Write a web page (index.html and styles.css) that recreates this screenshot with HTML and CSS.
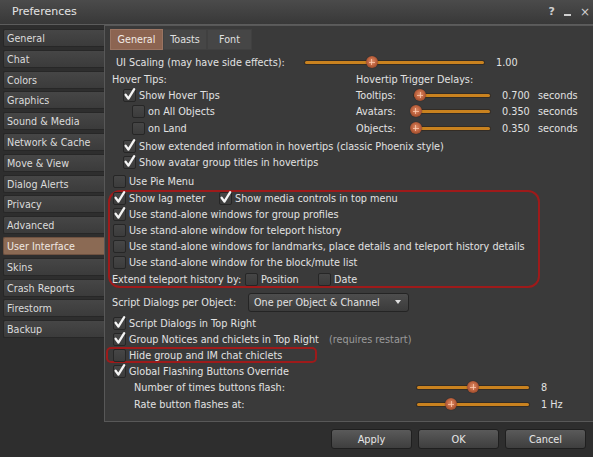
FILE: index.html
```html
<!DOCTYPE html>
<html>
<head>
    <meta charset="utf-8">
    <title>Preferences</title>
    <link rel="stylesheet" href="styles.css">
</head>
<body>
<div class="floater">
    <div class="titlebar">
        <span class="title">Preferences</span>
        <span class="ctrls">
            <span class="help">?</span>
            <span class="min"></span>
            <span class="close">&times;</span>
        </span>
    </div>
    <div class="main">
        <ul class="side">
            <li>General</li>
            <li>Chat</li>
            <li>Colors</li>
            <li>Graphics</li>
            <li>Sound &amp; Media</li>
            <li>Network &amp; Cache</li>
            <li>Move &amp; View</li>
            <li>Dialog Alerts</li>
            <li>Privacy</li>
            <li>Advanced</li>
            <li class="sel">User Interface</li>
            <li>Skins</li>
            <li>Crash Reports</li>
            <li>Firestorm</li>
            <li>Backup</li>
        </ul>
        <div class="panel">
            <div class="tabs">
                <span class="tab on t1">General</span>
                <span class="tab t2">Toasts</span>
                <span class="tab t3">Font</span>
            </div>
            <div class="content">
                <div class="row">
                    <span class="lbl-ui">UI Scaling (may have side effects):</span>
                    <span class="slider s-ui"><span class="knob" style="left: 37.4%"></span></span>
                    <span class="val">1.00</span>
                </div>
                <div class="row split mt1">
                    <div class="l">Hover Tips:</div>
                    <div class="r">Hovertip Trigger Delays:</div>
                </div>
                <div class="row split">
                    <div class="l"><span class="cb on lv1"><svg viewBox="0 0 13 13"><path d="M2.6 6.8 L5.4 10.6 L11.2 1.2"/></svg></span>Show Hover Tips</div>
                    <div class="r">
                        <span class="dl">Tooltips:</span>
                        <span class="slider s-delay"><span class="knob" style="left: 7.9%"></span></span>
                        <span class="val dv">0.700</span>seconds
                    </div>
                </div>
                <div class="row split">
                    <div class="l"><span class="cb lv2"></span>on All Objects</div>
                    <div class="r">
                        <span class="dl">Avatars:</span>
                        <span class="slider s-delay"><span class="knob" style="left: 2.6%"></span></span>
                        <span class="val dv">0.350</span>seconds
                    </div>
                </div>
                <div class="row split mt1">
                    <div class="l"><span class="cb lv2"></span>on Land</div>
                    <div class="r">
                        <span class="dl">Objects:</span>
                        <span class="slider s-delay"><span class="knob" style="left: 2.6%"></span></span>
                        <span class="val dv">0.350</span>seconds
                    </div>
                </div>
                <div class="row mt2"><span class="cb on lv1"><svg viewBox="0 0 13 13"><path d="M2.6 6.8 L5.4 10.6 L11.2 1.2"/></svg></span>Show extended information in hovertips (classic Phoenix style)</div>
                <div class="row"><span class="cb on lv1"><svg viewBox="0 0 13 13"><path d="M2.6 6.8 L5.4 10.6 L11.2 1.2"/></svg></span>Show avatar group titles in hovertips</div>
                <div class="row mt3"><span class="cb"></span>Use Pie Menu</div>

                <div class="ring big mt1">
                    <div class="row">
                        <span class="cb on"><svg viewBox="0 0 13 13"><path d="M2.6 6.8 L5.4 10.6 L11.2 1.2"/></svg></span><span class="w-lag">Show lag meter</span>
                        <span class="cb on"><svg viewBox="0 0 13 13"><path d="M2.6 6.8 L5.4 10.6 L11.2 1.2"/></svg></span>Show media controls in top menu
                    </div>
                    <div class="row"><span class="cb on"><svg viewBox="0 0 13 13"><path d="M2.6 6.8 L5.4 10.6 L11.2 1.2"/></svg></span>Use stand-alone windows for group profiles</div>
                    <div class="row"><span class="cb"></span>Use stand-alone window for teleport history</div>
                    <div class="row"><span class="cb"></span>Use stand-alone windows for landmarks, place details and teleport history details</div>
                    <div class="row"><span class="cb"></span>Use stand-alone window for the block/mute list</div>
                    <div class="row mt1">
                        <span class="w-ext">Extend teleport history by:</span>
                        <span class="cb nm"></span><span class="w-pos">Position</span>
                        <span class="cb nm"></span>Date
                    </div>
                </div>

                <div class="row tall mt4">
                    <span class="w-sd">Script Dialogs per Object:</span>
                    <span class="combo">One per Object &amp; Channel<i class="arrow"></i></span>
                </div>
                <div class="row mt3"><span class="cb on"><svg viewBox="0 0 13 13"><path d="M2.6 6.8 L5.4 10.6 L11.2 1.2"/></svg></span>Script Dialogs in Top Right</div>
                <div class="row"><span class="cb on"><svg viewBox="0 0 13 13"><path d="M2.6 6.8 L5.4 10.6 L11.2 1.2"/></svg></span><span class="w-gn">Group Notices and chiclets in Top Right</span><span class="note">(requires restart)</span></div>
                <div class="row ring small"><span class="cb"></span>Hide group and IM chat chiclets</div>
                <div class="row"><span class="cb on"><svg viewBox="0 0 13 13"><path d="M2.6 6.8 L5.4 10.6 L11.2 1.2"/></svg></span>Global Flashing Buttons Override</div>
                <div class="row">
                    <span class="w-fl">Number of times buttons flash:</span>
                    <span class="slider s-fl"><span class="knob" style="left: 50%"></span></span>
                    <span class="val">8</span>
                </div>
                <div class="row mt1">
                    <span class="w-fl">Rate button flashes at:</span>
                    <span class="slider s-fl"><span class="knob" style="left: 30.4%"></span></span>
                    <span class="val">1 Hz</span>
                </div>
            </div>
        </div>
    </div>
    <div class="footer">
        <button class="btn">Apply</button>
        <button class="btn">OK</button>
        <button class="btn">Cancel</button>
    </div>
</div>
</body>
</html>
```

FILE: styles.css
```css
* { box-sizing: border-box; }
html, body { margin: 0; padding: 0; background: #2e2e2e; }
body { font-family: "DejaVu Sans", "Noto Sans", sans-serif; font-size: 9.7px; color: #e2e2e2; }

.floater { width: 593px; height: 457px; display: flex; flex-direction: column; background: #2e2e2e; overflow: hidden; }

/* title bar */
.titlebar { flex: none; height: 25px; display: flex; align-items: center; justify-content: space-between; padding: 0 3px 1px 12px; background: linear-gradient(#4b4b4b, #383838); border-bottom: 1px solid #5c5c5c; }
.title { font-size: 11px; color: #e4e4e4; }
.ctrls { display: flex; align-items: center; gap: 9px; color: #cfcfcf; }
.help { font-size: 11px; font-weight: bold; }
.min { width: 7px; height: 2px; background: #cfcfcf; margin-top: 7px; }
.close { font-size: 12px; }

/* left list */
.main { flex: none; height: 397px; display: flex; }
.side { list-style: none; margin: 0; padding: 4px 0 0 3px; width: 104px; flex: none; }
.side li { height: 18px; line-height: 17px; margin-bottom: 2.8px; padding-left: 3px; font-size: 9.6px; color: #dcdcdc; background: linear-gradient(#464646, #3b3b3b); border: 1px solid #272727; border-right: none; border-radius: 2px 0 0 2px; }
.side li.sel { background: #8b6a54; border-color: #6f5241; color: #f0e8e2; }

/* right panel */
.panel { flex: 1; background: #3a3a3a; border-top: 1px solid #585858; border-left: 1px solid #585858; border-bottom: 1px solid #585858; padding: 3px 0 0 5px; }
.tabs { display: flex; height: 21px; }
.tab { display: flex; align-items: center; justify-content: center; font-size: 9.6px; background: #464646; border: 1px solid #404040; color: #e0e0e0; }
.tab.on { background: #8c6451; border-color: #9a7462; color: #f2ebe6; }
.t1 { width: 53px; }
.t2 { width: 44px; }
.t3 { width: 45px; }

.content { padding: 4px 0 0 2px; }
.row { display: flex; align-items: center; height: 16px; white-space: nowrap; }
.row.tall { height: 20px; }
.mt1 { margin-top: 1px; }
.mt2 { margin-top: 2px; }
.mt3 { margin-top: 3px; }
.mt4 { margin-top: 4px; }

.split .l { width: 244px; display: flex; align-items: center; }
.split .r { display: flex; align-items: center; }
.dl { width: 58px; }
.dv { width: 36px; }

/* checkbox */
.cb { position: relative; flex: none; width: 13px; height: 13px; margin: 0 3px 0 1px; background: linear-gradient(#464646, #3c3c3c); border: 1px solid #262626; border-radius: 2px; }
.cb.lv1 { margin-left: 11px; }
.cb.lv2 { margin-left: 20px; }
.cb.nm { margin-left: 0; }
.cb svg { position: absolute; left: -1px; top: -2px; width: 13px; height: 13px; overflow: visible; }
.cb path { fill: none; stroke: #f4f4f4; stroke-width: 2.3; stroke-linecap: round; stroke-linejoin: round; }

/* sliders */
.slider { position: relative; flex: none; height: 3px; background: #c9821f; border-radius: 2px; box-shadow: 0 0 0 1px rgba(40, 20, 0, 0.35); }
.s-ui { width: 179px; }
.s-delay { width: 76px; }
.s-fl { width: 112px; }
.knob { position: absolute; top: 50%; width: 12px; height: 12px; margin: -6px 0 0 -6px; border-radius: 50%; background: radial-gradient(circle at 50% 45%, #e0906a 0, #bf6440 45%, #7d3519 100%); box-shadow: 0 0 1px rgba(0, 0, 0, 0.6); }
.knob::before, .knob::after { content: ""; position: absolute; background: rgba(255, 205, 180, 0.75); }
.knob::before { left: 3px; top: 5.5px; width: 6px; height: 1px; }
.knob::after { left: 5.5px; top: 3px; width: 1px; height: 6px; }
.val { margin-left: 12px; }

.lbl-ui { width: 193px; padding-left: 4px; }
.w-lag { width: 89px; }
.w-ext { width: 133px; }
.w-pos { width: 57px; }
.w-sd { width: 136px; }
.w-gn { width: 200px; }
.w-fl { width: 305px; padding-left: 22px; }
.note { color: #9a9a9a; }

/* red highlight rings */
.ring { box-shadow: inset 0 0 0 2px #9e1a1a; }
.ring.big { width: 432px; height: 98px; margin-left: -4px; padding-left: 4px; border-radius: 12px; }
.ring.small { width: 211px; margin-left: -6px; padding-left: 6px; border-radius: 5px; }

/* combo box */
.combo { display: flex; align-items: center; justify-content: space-between; width: 161px; height: 19px; padding: 0 7px 0 5px; font-size: 9.6px; background: linear-gradient(#4d4d4d, #3b3b3b); border: 1px solid #242424; border-radius: 3px; }
.arrow { width: 0; height: 0; border-left: 3.5px solid transparent; border-right: 3.5px solid transparent; border-top: 4px solid #dedede; }

/* footer */
.footer { flex: 1; display: flex; justify-content: flex-end; gap: 6px; padding: 7px 7px 0 0; }
.btn { width: 81px; height: 20px; padding: 0; font-family: inherit; font-size: 9.8px; color: #e6e6e6; background: linear-gradient(#5a5a5a, #3e3e3e); border: 1px solid #1f1f1f; border-radius: 3px; }
```
